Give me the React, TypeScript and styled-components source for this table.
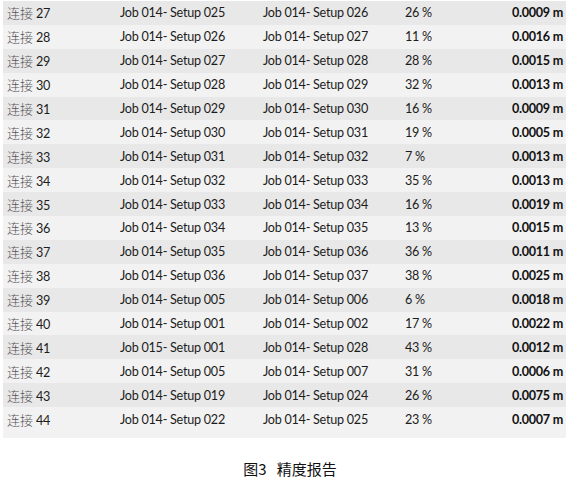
import React from 'react';
import styled, { createGlobalStyle } from 'styled-components';

const GlobalStyle = createGlobalStyle`
    html, body {
        margin: 0;
        padding: 0;
        background: #ffffff;
    }
`;

const Page = styled.div`
    width: 583px;
    height: 480px;
    padding: 1px 0 0 3px;
    box-sizing: border-box;
    font-family: Lato, "Noto Sans CJK SC", sans-serif;
`;

const Table = styled.div`
    width: 563px;
    padding-bottom: 7px;
    background: #f2f2f2;
`;

const Row = styled.div<{ $shade: boolean }>`
    display: grid;
    grid-template-columns: 113px 143px 142px 1fr 120px;
    align-items: center;
    height: 23.9px;
    padding: 0 3px 0 4px;
    background: ${p => (p.$shade ? '#e8e8e8' : '#f2f2f2')};
    font-size: 12.6px;
    letter-spacing: -0.25px;
    color: #1c1c1c;
`;

const Label = styled.span`
    display: flex;
    align-items: baseline;
    gap: 3px;
`;

const Han = styled.span`
    font-family: "Noto Sans CJK SC", sans-serif;
    font-size: 13px;
    font-weight: 300;
    letter-spacing: 0;
    color: #555555;
`;

const Cell = styled.span`
    white-space: nowrap;
`;

const Value = styled.span`
    text-align: right;
    font-weight: 700;
    color: #111111;
`;

const Caption = styled.div`
    margin-top: 20px;
    text-align: center;
    font-family: "Noto Sans CJK SC", sans-serif;
    font-size: 15px;
    color: #111111;
    padding-right: 6px;
`;

const rows: [number, string, string, number, string][] = [
    [27, 'Job 014- Setup 025', 'Job 014- Setup 026', 26, '0.0009'],
    [28, 'Job 014- Setup 026', 'Job 014- Setup 027', 11, '0.0016'],
    [29, 'Job 014- Setup 027', 'Job 014- Setup 028', 28, '0.0015'],
    [30, 'Job 014- Setup 028', 'Job 014- Setup 029', 32, '0.0013'],
    [31, 'Job 014- Setup 029', 'Job 014- Setup 030', 16, '0.0009'],
    [32, 'Job 014- Setup 030', 'Job 014- Setup 031', 19, '0.0005'],
    [33, 'Job 014- Setup 031', 'Job 014- Setup 032', 7, '0.0013'],
    [34, 'Job 014- Setup 032', 'Job 014- Setup 033', 35, '0.0013'],
    [35, 'Job 014- Setup 033', 'Job 014- Setup 034', 16, '0.0019'],
    [36, 'Job 014- Setup 034', 'Job 014- Setup 035', 13, '0.0015'],
    [37, 'Job 014- Setup 035', 'Job 014- Setup 036', 36, '0.0011'],
    [38, 'Job 014- Setup 036', 'Job 014- Setup 037', 38, '0.0025'],
    [39, 'Job 014- Setup 005', 'Job 014- Setup 006', 6, '0.0018'],
    [40, 'Job 014- Setup 001', 'Job 014- Setup 002', 17, '0.0022'],
    [41, 'Job 015- Setup 001', 'Job 014- Setup 028', 43, '0.0012'],
    [42, 'Job 014- Setup 005', 'Job 014- Setup 007', 31, '0.0006'],
    [43, 'Job 014- Setup 019', 'Job 014- Setup 024', 26, '0.0075'],
    [44, 'Job 014- Setup 022', 'Job 014- Setup 025', 23, '0.0007'],
];

export default function App() {
    return (
        <Page>
            <GlobalStyle />
            <Table>
                {rows.map(([n, from, to, pct, dev], i) => (
                    <Row key={n} $shade={i % 2 === 0}>
                        <Label>
                            <Han>连接</Han>
                            <span>{n}</span>
                        </Label>
                        <Cell>{from}</Cell>
                        <Cell>{to}</Cell>
                        <Cell>{pct} %</Cell>
                        <Value>{dev} m</Value>
                    </Row>
                ))}
            </Table>
            <Caption>图3&nbsp;&nbsp;&nbsp;精度报告</Caption>
        </Page>
    );
}
